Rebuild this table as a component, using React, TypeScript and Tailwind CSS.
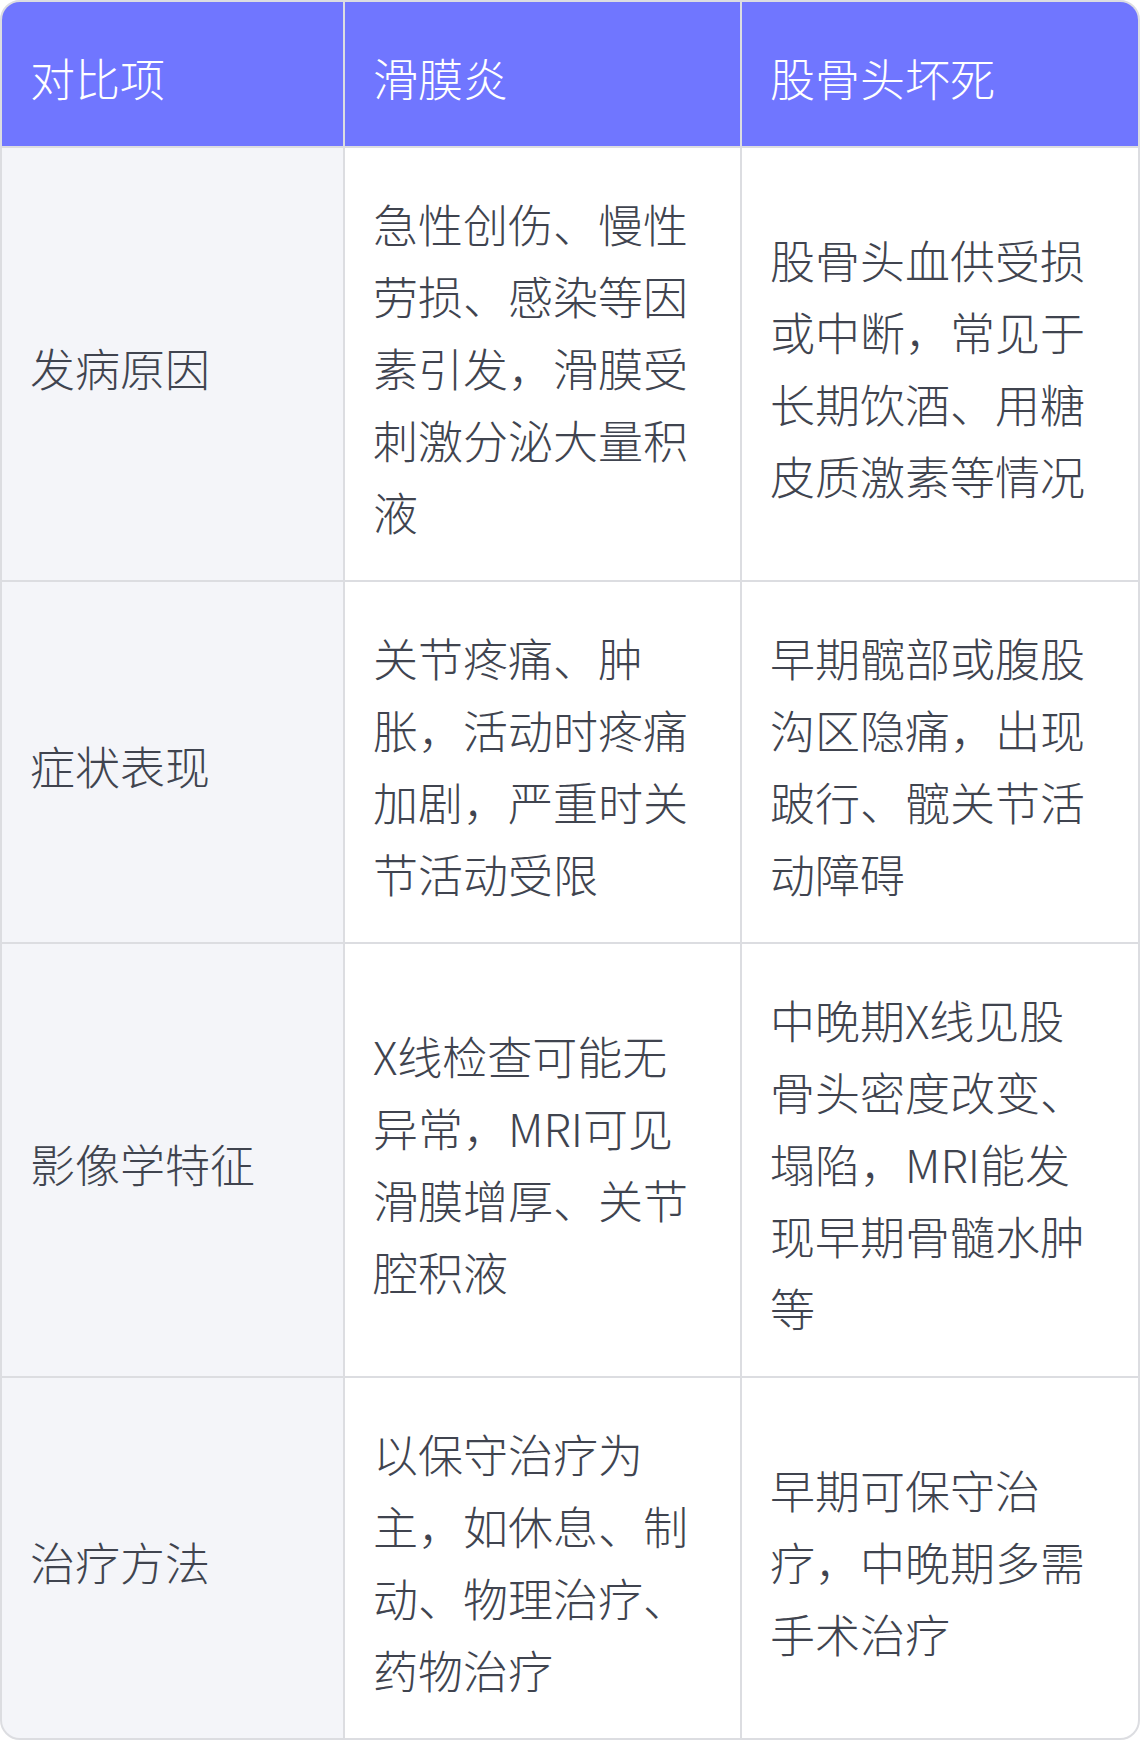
const ROWS: { label: string; a: string; b: string }[] = [
  {
    label: "发病原因",
    a: "急性创伤、慢性劳损、感染等因素引发，滑膜受刺激分泌大量积液",
    b: "股骨头血供受损或中断，常见于长期饮酒、用糖皮质激素等情况",
  },
  {
    label: "症状表现",
    a: "关节疼痛、肿胀，活动时疼痛加剧，严重时关节活动受限",
    b: "早期髋部或腹股沟区隐痛，出现跛行、髋关节活动障碍",
  },
  {
    label: "影像学特征",
    a: "X线检查可能无异常，MRI可见滑膜增厚、关节腔积液",
    b: "中晚期X线见股骨头密度改变、塌陷，MRI能发现早期骨髓水肿等",
  },
  {
    label: "治疗方法",
    a: "以保守治疗为主，如休息、制动、物理治疗、药物治疗",
    b: "早期可保守治疗，中晚期多需手术治疗",
  },
];

// cells share the same padding; the grey gap behind them draws the rules
const cell = "flex items-center pl-[28px] pr-[36px] pt-[40px] pb-[32px]";

export default function App() {
  return (
    <div className="w-[1140px] bg-white font-['Noto_Sans_CJK_SC','Noto_Sans',sans-serif] text-[45px] leading-[72px] font-light">
      <div className="grid grid-cols-[341px_395px_396px] gap-[2px] bg-[#dcdde1] border-2 border-[#dcdde1] rounded-[20px] overflow-hidden">
        <div className={`${cell} bg-[#7076ff] text-white`}>对比项</div>
        <div className={`${cell} bg-[#7076ff] text-white`}>滑膜炎</div>
        <div className={`${cell} bg-[#7076ff] text-white`}>股骨头坏死</div>
        {ROWS.map((r) => (
          <div key={r.label} className="contents">
            <div className={`${cell} bg-[#f4f5f9] text-[#40444f]`}>{r.label}</div>
            <div className={`${cell} bg-white text-[#40444f]`}>{r.a}</div>
            <div className={`${cell} bg-white text-[#40444f]`}>{r.b}</div>
          </div>
        ))}
      </div>
    </div>
  );
}
